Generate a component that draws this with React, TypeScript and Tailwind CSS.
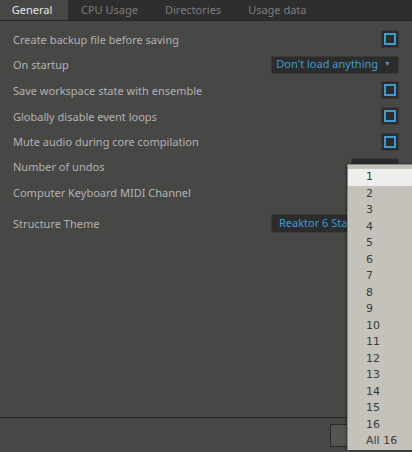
import React from "react";

const font = { fontFamily: '"Noto Sans", "Open Sans", sans-serif' };

function Checkbox() {
  return (
    <div className="w-[18px] h-[18px] bg-[#2c2c2c] border border-[#3a3a3a] flex items-center justify-center">
      <div className="w-[12px] h-[12px] border-2 border-[#3d9dd3]" />
    </div>
  );
}

function Row({ label, children, className = "" }: { label: string; children?: React.ReactNode; className?: string }) {
  return (
    <div className={"flex items-center justify-between pl-[13px] pr-[13px] " + className}>
      <span className="text-[11px] text-[#b3b3b3] leading-none">{label}</span>
      {children}
    </div>
  );
}

export default function App() {
  const items = ["1", "2", "3", "4", "5", "6", "7", "8", "9", "10", "11", "12", "13", "14", "15", "16", "All 16"];
  return (
    <div className="relative w-[412px] h-[452px] bg-[#474746] overflow-hidden flex flex-col" style={font}>
      <div className="h-[21px] bg-[#2e2e2e] flex items-stretch text-[11px] border-b border-[#272727]">
        <div className="w-[68px] bg-[#474746] text-[#e8e8e8] flex items-center justify-center pr-[4px]">General</div>
        <div className="flex items-center text-[#7d7d7d] ml-[13px]">CPU Usage</div>
        <div className="flex items-center text-[#7d7d7d] ml-[27px]">Directories</div>
        <div className="flex items-center text-[#7d7d7d] ml-[27px]">Usage data</div>
      </div>
      <div className="flex-1 flex flex-col pt-[5px]">
        <Row label="Create backup file before saving" className="h-[26px]"><Checkbox /></Row>
        <Row label="On startup" className="h-[25px]">
          <div className="w-[128px] h-[18px] bg-[#2c2c2c] border border-[#3a3a3a] flex items-center justify-end pr-[7px] gap-[6px] text-[11px] text-[#3d9dd3]">
            <span>Don't load anything</span>
            <span className="text-[7px]">▼</span>
          </div>
        </Row>
        <Row label="Save workspace state with ensemble" className="h-[26px]"><Checkbox /></Row>
        <Row label="Globally disable event loops" className="h-[26px]"><Checkbox /></Row>
        <Row label="Mute audio during core compilation" className="h-[25px]"><Checkbox /></Row>
        <Row label="Number of undos" className="h-[25px]">
          <div className="w-[48px] h-[17px] bg-[#2c2c2c] border border-[#3a3a3a]" />
        </Row>
        <Row label="Computer Keyboard MIDI Channel" className="h-[26px]" />
        <Row label="Structure Theme" className="h-[26px] mt-[5px]">
          <div className="w-[128px] h-[19px] bg-[#2c2c2c] border border-[#3a3a3a] flex items-center pl-[7px] text-[11px] text-[#3d9dd3] overflow-hidden whitespace-nowrap">
            <span>Reaktor 6 Standard</span>
          </div>
        </Row>
      </div>
      <div className="h-[35px] border-t-[1.5px] border-[#272727] flex items-start justify-end pt-[6px] pr-[10px]">
        <div className="w-[72px] h-[23px] bg-[#545452] border border-[#2a2a2a]" />
      </div>
      <div className="absolute left-[347px] top-[164px] w-[80px] bg-[#c5c1bb] border-l border-t border-[#8a8884] pt-[4px] shadow-[-1px_0_2px_rgba(0,0,0,0.4)]" style={{ fontFamily: '"DejaVu Sans", "Noto Sans", sans-serif' }}>
        {items.map((it, i) => (
          <div
            key={it}
            className={
              "h-[16.5px] flex items-center pl-[18px] text-[11px] " +
              (i === 0 ? "bg-[#eeeeec] text-[#3a3a3a]" : "text-[#3c3c3c]")
            }
          >
            {it}
          </div>
        ))}
      </div>
    </div>
  );
}
